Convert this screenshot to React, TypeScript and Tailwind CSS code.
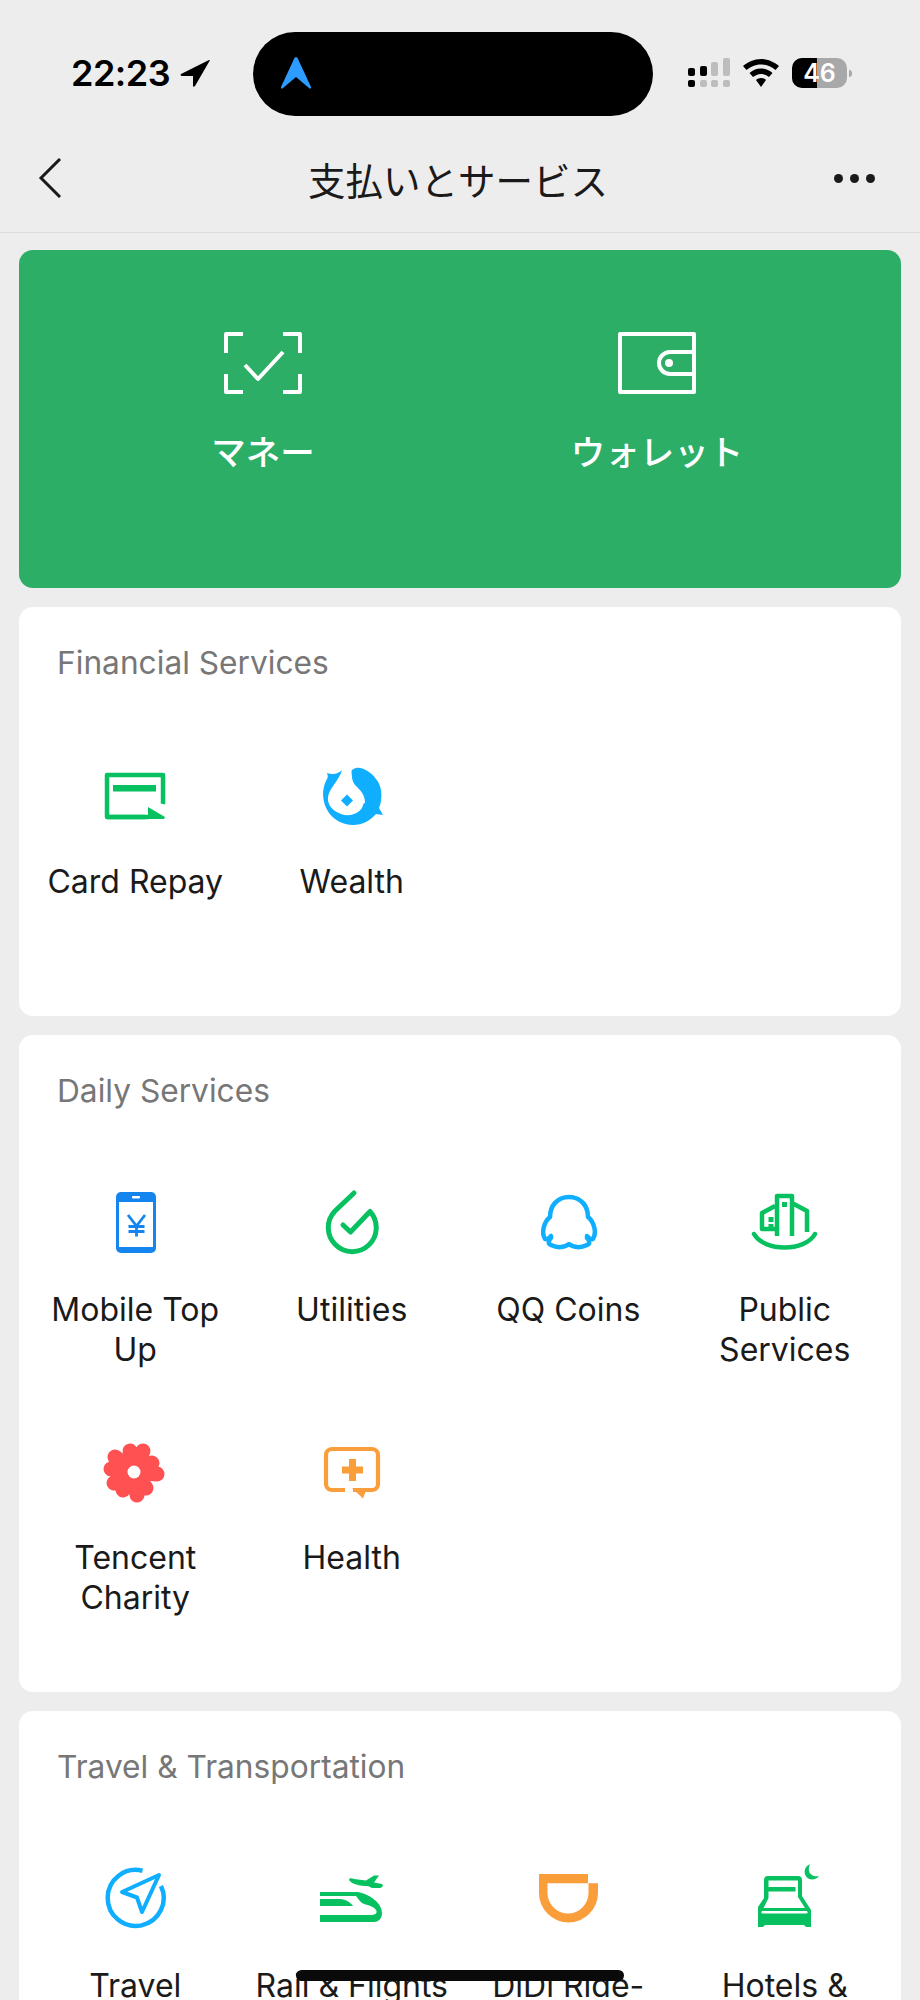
import type { ReactNode } from 'react';

const JP = { fontFamily: '"Noto Sans CJK JP", sans-serif' };

// every service icon is drawn in a 72x72 box, the centre of the box is the centre of the cell
function Icon({ children }: { children: ReactNode }) {
  return (
    <svg viewBox="0 0 72 72" className="h-[72px] w-[72px] overflow-visible">
      {children}
    </svg>
  );
}

const flowerPetals = [
  [31, 14, 44, 14],
  [53, 26, 58, 37],
  [47, 51, 38, 58],
  [24, 53, 15, 46],
  [12, 32, 16, 20],
];

const icons = {
  card: (
    <Icon>
      <path d="M8 14H64V56H8Z" fill="none" stroke="#07c160" strokeWidth="4.500" strokeLinejoin="round" />
      <rect x="14" y="24" width="43" height="6.500" fill="#07c160" />
      <path d="M46 40L70 44V60H46Z" fill="#fff" />
      <path d="M49 46L66 56 65 58H49Z" fill="#07c160" />
      <path d="M8 56H50" fill="none" stroke="#07c160" strokeWidth="4.500" />
    </Icon>
  ),
  wealth: (
    <Icon>
      <path
        d="M26 9C22 13 17 14 11 12C12 15 12 16 11 18C5 28 6 42 13 52C22 64 38 67 50 61C54 59 57 56 60 53L67 54L63 47C67 37 66 25 60 18C54 10 46 6 40 7C37 8 35 9 35.500 11C36 16 36 20 39 24C44 29 49 33 49 42C47 42 47 45 46 47C42 53 33 56 25 53C17 50 11 44 12 36C13 27 23 20 26 9Z"
        fill="#10aeff"
      />
      <path d="M31 33.500L37 39.500 31 45.500 25 39.500Z" fill="#10aeff" />
    </Icon>
  ),
  phone: (
    <Icon>
      <path d="M17 8A5 5 0 0 1 22 3H52A5 5 0 0 1 57 8V59A5 5 0 0 1 52 64H22A5 5 0 0 1 17 59Z" fill="#1485ee" />
      <rect x="20" y="13" width="34" height="45" fill="#fff" />
      <rect x="33" y="7" width="8" height="2.500" rx="1" fill="#fff" />
      <path d="M29 26L37.500 37 46 26M29.500 37.500H45.500M29.500 42.500H45.500M37.500 37V47.500" fill="none" stroke="#1485ee" strokeWidth="2.800" />
    </Icon>
  ),
  utilities: (
    <Icon>
      <path d="M38 4L19 22A24 24 0 1 0 54 22.500L34.500 43L27 36" fill="none" stroke="#07c160" strokeWidth="5" strokeLinecap="round" strokeLinejoin="round" />
    </Icon>
  ),
  qq: (
    <Icon>
      <path
        d="M37 8C25 8 18 17 18 28C12 33 9 43 13 50C15 51 17 49 19 47L19 49C16 52 16 55 19 56C25 59 32 59 37 55C42 59 49 59 55 56C58 55 58 52 55 49L55 47C57 49 59 51 61 50C65 43 62 33 56 28C56 17 49 8 37 8Z"
        fill="none"
        stroke="#10aeff"
        strokeWidth="4.500"
        strokeLinejoin="round"
      />
    </Icon>
  ),
  publicServices: (
    <Icon>
      <path d="M5 45C15 63 56 63 66 45" fill="none" stroke="#07c160" strokeWidth="4.500" strokeLinecap="round" />
      <path d="M28 47V7H43V47M43 14L58 22V43M26 17L13 24V40H26" fill="none" stroke="#07c160" strokeWidth="4.500" strokeLinejoin="round" />
      <rect x="19.500" y="28" width="5" height="5" fill="#07c160" />
      <rect x="19.500" y="35" width="5" height="5" fill="#07c160" />
      <rect x="33" y="13" width="5" height="5" fill="#07c160" />
    </Icon>
  ),
  flower: (
    <Icon>
      {flowerPetals.map(([ax, ay, bx, by]) => (
        <path
          key={ax + '-' + ay}
          d={`M35 35L${ax} ${ay}M35 35L${bx} ${by}`}
          fill="none"
          stroke="#ff5151"
          strokeWidth="15"
          strokeLinecap="round"
        />
      ))}
      <circle cx="35" cy="35" r="6.500" fill="#fff" />
    </Icon>
  ),
  health: (
    <Icon>
      <path d="M29 53H16A6 6 0 0 1 10 47V18A6 6 0 0 1 16 12H56A6 6 0 0 1 62 18V47A6 6 0 0 1 56 53H37" fill="none" stroke="#fa9d3b" strokeWidth="4.200" />
      <path d="M36 51H51L47 61.500Z" fill="#fa9d3b" />
      <path d="M33 22H40V29.500H47V36.500H40V44H33V36.500H26V29.500H33Z" fill="#fa9d3b" />
    </Icon>
  ),
  travel: (
    <Icon>
      <path d="M43.500 5.800A28 28 0 1 0 62 21" fill="none" stroke="#10aeff" strokeWidth="4.500" />
      <path d="M60 10L23 27L38 32.500L43 47Z" fill="none" stroke="#10aeff" strokeWidth="4" strokeLinejoin="round" />
    </Icon>
  ),
  rail: (
    <Icon>
      <path d="M4 27H42C52 29 66 37 66 48C66 54 62 57 58 57H4V50H54C59 50 62 48 60 45C58 41 50 40 46 38C43 36 42 33 40 31H4Z" fill="#07c160" />
      <path d="M4 34H24C30 34 35 38 37 41H4Z" fill="#07c160" />
      <path d="M33 15C33 13 36 13 38 14L50 15.500L58 10.500H63L58 17.500L66 19C68 21 66 23 63 23H56L52 21C43 21 36 19 33 15Z" fill="#07c160" />
    </Icon>
  ),
  didi: (
    <Icon>
      <path d="M7 9H56V18.300H66V28A29.500 29.500 0 0 1 7 28Z" fill="#fa9d3b" />
      <path d="M15.500 18.300H56.500V28A20.500 20.500 0 0 1 15.500 28Z" fill="#fff" />
    </Icon>
  ),
  hotel: (
    <Icon>
      <path d="M15 15A4 4 0 0 1 19 11H49A4 4 0 0 1 53 15V31L62 45V62H57L55 60H16L14 62H9V42L15 33Z" fill="#07c160" />
      <path d="M19.500 15.500H49V32L56 43H14.500L19.500 33Z" fill="#fff" />
      <rect x="18" y="22" width="28.500" height="4.500" fill="#07c160" />
      <rect x="12.500" y="46" width="46" height="2.500" rx="1.200" fill="#fff" />
      <path d="M61 -1C54 2 54 11 60 14C64 15 68 14 70 11C65 12 61 10 60 6C59.500 4 60 1 61 -1Z" fill="#07c160" />
    </Icon>
  ),
};

type Service = { label: string; icon: ReactNode };

function ServiceCard({ title, items }: { title: string; items: Service[] }) {
  return (
    <section className="rounded-[14px] bg-white px-2 pb-[49px]">
      <h2 className="flex h-[112px] items-center pl-[30px] text-[31.700px] font-normal text-[#777]">{title}</h2>
      <div className="grid grid-cols-4">
        {items.map((item) => (
          <div key={item.label} className="flex h-[248px] flex-col items-center pt-[42px]">
            <div className="h-[72px]">{item.icon}</div>
            <div className="mt-[29px] min-h-[79px] w-[204px] text-center text-[32px] leading-[39.500px] text-[#1a1a1a]">
              {item.label}
            </div>
          </div>
        ))}
      </div>
    </section>
  );
}

function StatusBar() {
  return (
    <div className="flex h-[116px] items-start">
      <div className="ml-[71px] mt-[50px] w-[101px] text-[36px] font-semibold leading-[46px] tracking-[-0.5px] text-black">22:23</div>
      <svg viewBox="0 0 30 28" className="ml-[8px] mt-[59px] h-[28px] w-[30px]">
        <path d="M29 1L1 15C0 16 1 17 2 17H13V27C13 28 14 28 15 27L29.500 2C30 1 30 1 29 1Z" fill="#000" />
      </svg>
      <div className="ml-[43px] mt-[32px] flex h-[84px] w-[400px] items-center rounded-[42px] bg-black pl-[28px]">
        <svg viewBox="0 0 30 32" className="h-[32px] w-[30px] -translate-y-[1px]">
          <path d="M15 0C14 0 13.500 1 13 2L0 30C0 32 1 32 2 31L15 20 28 31C29 32 30 32 30 30L17 2C16.500 1 16 0 15 0Z" fill="#2e9bff" />
        </svg>
      </div>
      <svg viewBox="0 0 42 32" className="ml-[35px] mt-[57px] h-[32px] w-[42px]">
        <g fill="#000">
          <rect x="0" y="11" width="7" height="8" rx="2" />
          <rect x="0" y="23" width="7" height="7" rx="2" />
          <rect x="12" y="9" width="7" height="10" rx="2" />
        </g>
        <g fill="#bdbdbd">
          <rect x="12" y="23" width="7" height="7" rx="2" />
          <rect x="23" y="5" width="7" height="14" rx="2" />
          <rect x="23" y="23" width="7" height="7" rx="2" />
          <rect x="35" y="1" width="7" height="18" rx="2" />
          <rect x="35" y="23" width="7" height="7" rx="2" />
        </g>
      </svg>
      <svg viewBox="0 0 36 28" className="ml-[13px] mt-[59px] h-[28px] w-[36px]">
        <path d="M18 0C11 0 5 3 0 7L3.500 11C7 8 12 5.500 18 5.500 24 5.500 29 8 32.500 11L36 7C31 3 25 0 18 0Z" fill="#000" />
        <path d="M18 9.500C13 9.500 9.500 11.500 6.500 14L10 18C12 16.500 15 15 18 15 21 15 24 16.500 26 18L29.500 14C26.500 11.500 23 9.500 18 9.500Z" fill="#000" />
        <path d="M18 19C15.500 19 14 20 13 21L18 28 23 21C22 20 20.500 19 18 19Z" fill="#000" />
      </svg>
      <div className="relative ml-[13px] mt-[58px] flex h-[30px] w-[55px] items-center justify-center overflow-hidden rounded-[10px] bg-[#a8a8a8]">
        <div className="absolute inset-y-0 left-0 w-[25px] bg-black" />
        <span className="relative text-[25px] font-semibold leading-none text-white">46</span>
      </div>
      <div className="ml-[2px] mt-[70px] h-[7px] w-[3px] rounded-r-full bg-[#a8a8a8]" />
    </div>
  );
}

function NavBar() {
  return (
    <div className="flex h-[117px] items-center justify-between border-b border-[#dcdcdc] pl-[38px] pr-[45px] pt-[9px]">
      <svg viewBox="0 0 24 40" className="h-[40px] w-[24px] -translate-y-[1px]">
        <path d="M22 1L3 20L22 39" fill="none" stroke="#1a1a1a" strokeWidth="3" />
      </svg>
      <h1 className="ml-[20px] text-[37.500px] font-normal leading-none text-[#1a1a1a]" style={JP}>
        支払いとサービス
      </h1>
      <div className="flex gap-[7px]">
        <span className="h-[9px] w-[9px] rounded-full bg-[#1a1a1a]" />
        <span className="h-[9px] w-[9px] rounded-full bg-[#1a1a1a]" />
        <span className="h-[9px] w-[9px] rounded-full bg-[#1a1a1a]" />
      </div>
    </div>
  );
}

function PayCard() {
  return (
    <section className="mt-[17px] flex h-[338px] justify-between rounded-[14px] bg-[#2cae67] px-[47px] pt-[82px] text-white">
      <div className="flex w-[394px] flex-col items-center">
        <svg viewBox="0 0 78 62" className="h-[62px] w-[78px]">
          <path d="M19 2H2V21M59 2H76V21M19 60H2V42M59 60H76V42" fill="none" stroke="#fff" strokeWidth="4" strokeLinejoin="round" />
          <path d="M21 33L34 47L59 20" fill="none" stroke="#fff" strokeWidth="4" strokeLinejoin="round" />
        </svg>
        <div className="mt-[34px] text-[34.500px] font-medium leading-[45px]" style={JP}>マネー</div>
      </div>
      <div className="flex w-[394px] flex-col items-center">
        <svg viewBox="0 0 78 62" className="h-[62px] w-[78px]">
          <path d="M2 2H76V60H2Z" fill="none" stroke="#fff" strokeWidth="4" strokeLinejoin="round" />
          <path d="M76 20H52A11 11 0 0 0 52 42H76" fill="none" stroke="#fff" strokeWidth="4" />
          <circle cx="51" cy="31" r="4" fill="#fff" />
        </svg>
        <div className="mt-[34px] text-[34.500px] font-medium leading-[45px]" style={JP}>ウォレット</div>
      </div>
    </section>
  );
}

export default function App() {
  return (
    <div className="relative h-[2000px] w-[920px] overflow-hidden bg-[#ededed] font-['Inter',sans-serif]">
      <StatusBar />
      <NavBar />
      <main className="flex flex-col gap-[19px] px-[19px]">
        <PayCard />
        <ServiceCard
          title="Financial Services"
          items={[
            { label: 'Card Repay', icon: icons.card },
            { label: 'Wealth', icon: icons.wealth },
          ]}
        />
        <ServiceCard
          title="Daily Services"
          items={[
            { label: 'Mobile Top Up', icon: icons.phone },
            { label: 'Utilities', icon: icons.utilities },
            { label: 'QQ Coins', icon: icons.qq },
            { label: 'Public Services', icon: icons.publicServices },
            { label: 'Tencent Charity', icon: icons.flower },
            { label: 'Health', icon: icons.health },
          ]}
        />
        <ServiceCard
          title="Travel & Transportation"
          items={[
            { label: 'Travel', icon: icons.travel },
            { label: 'Rail & Flights', icon: icons.rail },
            { label: 'DiDi Ride-', icon: icons.didi },
            { label: 'Hotels &', icon: icons.hotel },
          ]}
        />
      </main>
      {/* home indicator sits over the list */}
      <div className="absolute left-[296px] top-[1970px] h-[11px] w-[328px] rounded-full bg-[#0a0a0a]" />
    </div>
  );
}
